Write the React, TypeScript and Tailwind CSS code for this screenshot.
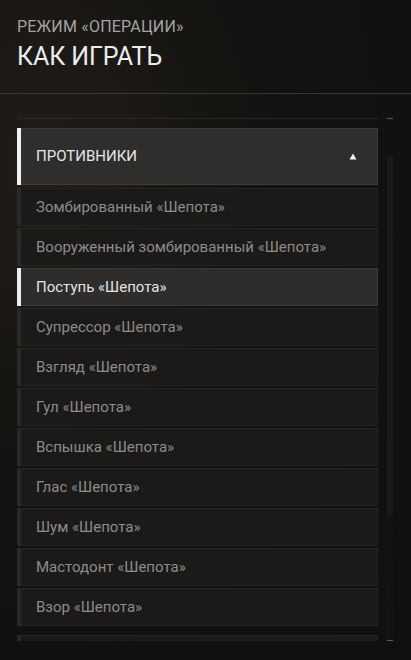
const enemies = [
  'Зомбированный «Шепота»',
  'Вооруженный зомбированный «Шепота»',
  'Поступь «Шепота»',
  'Супрессор «Шепота»',
  'Взгляд «Шепота»',
  'Гул «Шепота»',
  'Вспышка «Шепота»',
  'Глас «Шепота»',
  'Шум «Шепота»',
  'Мастодонт «Шепота»',
  'Взор «Шепота»',
];

const ACTIVE = 2;

function EnemyRow({ name, active }: { name: string; active: boolean }) {
  return (
    <div
      className={
        active
          ? 'flex h-[38px] items-center border border-[#3c3b3a] border-l-0 bg-[#2e2d2c]'
          : 'flex h-[38px] items-center border border-[#252423] border-l-0 bg-[#1b1a19]'
      }
    >
      <div className={active ? 'h-[38px] w-[4px] bg-[#ededed]' : 'h-[38px] w-[4px] bg-[#2a2928]'} />
      <span className={active ? 'pl-[15px] text-[15px] text-[#e4e4e4]' : 'pl-[15px] text-[15px] text-[#8c8c8c]'}>
        {name}
      </span>
    </div>
  );
}

export default function App() {
  return (
    <div
      className="h-[660px] w-full overflow-hidden bg-[#121110] bg-[radial-gradient(ellipse_at_10%_25%,#211d19_0%,#131210_45%,#111010_100%)]"
      style={{ fontFamily: 'Roboto, "Noto Sans", sans-serif' }}
    >
      {/* Заголовок */}
      <div className="h-[94px] border-b border-[#393734] px-[17px] pt-[17px]">
        <p className="text-[16px] leading-[20px] tracking-[0.2px] text-[#a3a3a3]">РЕЖИМ «ОПЕРАЦИИ»</p>
        <h1 className="mt-[5px] text-[25px] leading-[30px] tracking-[-0.1px] text-[#ececec]">КАК ИГРАТЬ</h1>
      </div>

      <div className="flex pt-[24px]">
        {/* Список */}
        <div className="ml-[17px] h-[523px] w-[361px] overflow-hidden border-t border-[#2a2826]">
          <div className="mt-[9px] flex h-[57px] items-center border border-[#3d3c3b] border-l-0 bg-[#2f2e2d]">
            <div className="h-[57px] w-[4px] bg-[#f0f0f0]" />
            <span className="flex-1 pl-[15px] text-[15px] text-[#e6e6e6]">ПРОТИВНИКИ</span>
            <svg width="8" height="7" viewBox="0 0 8 7" className="mr-[20px]">
              <path d="M4 0.5 L7.5 6.5 L0.5 6.5 Z" fill="#f2f2f2" />
            </svg>
          </div>

          <div className="mt-[3px] flex flex-col gap-[2px]">
            {enemies.map((e, i) => (
              <EnemyRow key={e} name={e} active={i === ACTIVE} />
            ))}
          </div>

          <div className="mt-[9px] flex h-[38px] border border-[#252423] border-l-0 bg-[#1b1a19]">
            <div className="w-[4px] bg-[#2a2928]" />
          </div>
        </div>

        {/* Скроллбар */}
        <div className="ml-[9px] flex h-[523px] w-[6px] flex-col">
          <div className="h-[1px] bg-[#5c5b5a]" />
          <div className="h-[38px] bg-[#121110]" />
          <div className="h-[358px] bg-[#1b1a19]" />
          <div className="flex-1 bg-[#131211]" />
          <div className="h-[1px] bg-[#5c5b5a]" />
        </div>
      </div>
    </div>
  );
}
